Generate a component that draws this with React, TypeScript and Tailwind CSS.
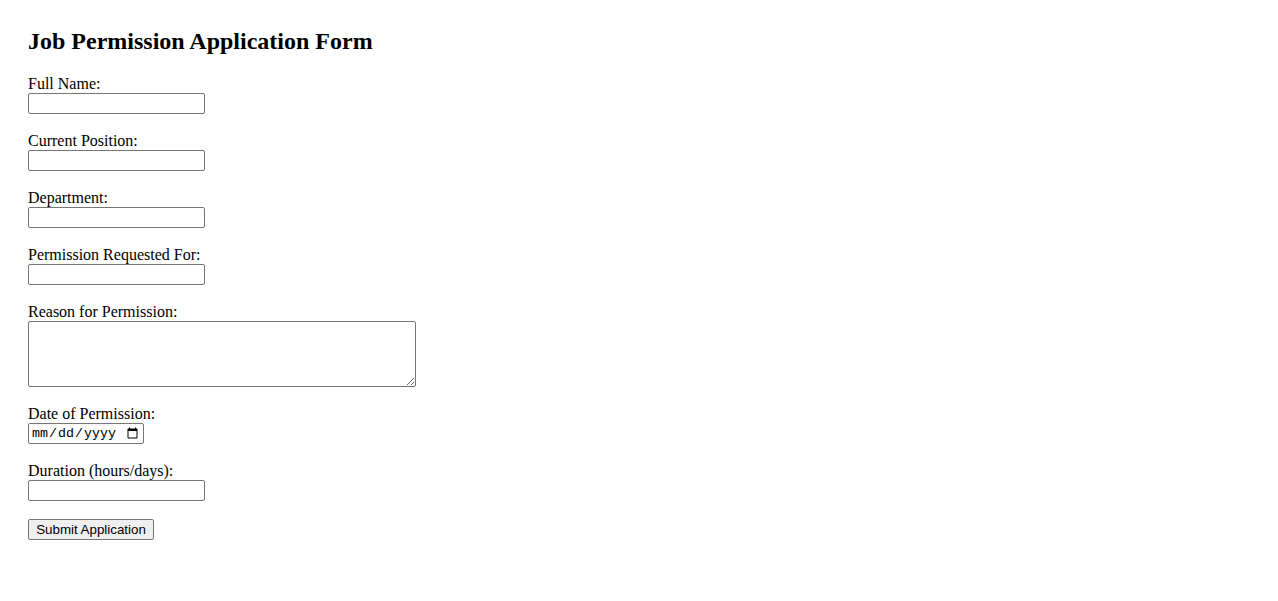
import React from "react";

const serif = { fontFamily: '"Liberation Serif", "Times New Roman", serif' };

const fieldClass =
  "block w-[177px] h-[21px] border border-[#767676] rounded-[2px] bg-white px-[2px] text-[13.33px] font-['Liberation_Sans',Arial,sans-serif] text-black outline-none";

const Field = ({ label, children }: { label: string; children: React.ReactNode }) => (
  <div className="flex flex-col mb-[18px]">
    <label className="block h-[18px] leading-[18px] text-[16px]">{label}</label>
    {children}
  </div>
);

export default function App() {
  return (
    <div
      className="min-h-[601px] w-full bg-white text-black pt-[28px] pl-[28px] font-['Liberation_Serif','Times_New_Roman',serif]"
      style={serif}
    >
      <h2 className="text-[24px] font-bold leading-[27px] mb-[20px]">Job Permission Application Form</h2>

      <form className="flex flex-col items-start" onSubmit={(e) => e.preventDefault()}>
        <Field label="Full Name:">
          <input type="text" className={fieldClass} />
        </Field>
        <Field label="Current Position:">
          <input type="text" className={fieldClass} />
        </Field>
        <Field label="Department:">
          <input type="text" className={fieldClass} />
        </Field>
        <Field label="Permission Requested For:">
          <input type="text" className={fieldClass} />
        </Field>
        <Field label="Reason for Permission:">
          <textarea className="block w-[388px] h-[66px] border border-[#767676] rounded-[2px] bg-white p-[2px] text-[13.33px] font-['Liberation_Mono','Courier_New',monospace] outline-none resize" />
        </Field>
        <Field label="Date of Permission:">
          <input
            type="date"
            className="block w-[116px] h-[21px] border border-[#767676] rounded-[2px] bg-white px-[2px] text-[13.33px] font-['Liberation_Mono','Courier_New',monospace] text-black outline-none"
          />
        </Field>
        <Field label="Duration (hours/days):">
          <input type="text" className={fieldClass} />
        </Field>
        <button
          type="submit"
          className="w-[126px] h-[21px] px-[6px] border border-[#767676] rounded-[2px] bg-[#efefef] text-[13.33px] leading-[17px] font-['Liberation_Sans',Arial,sans-serif] text-black text-center"
        >
          Submit Application
        </button>
      </form>
    </div>
  );
}
